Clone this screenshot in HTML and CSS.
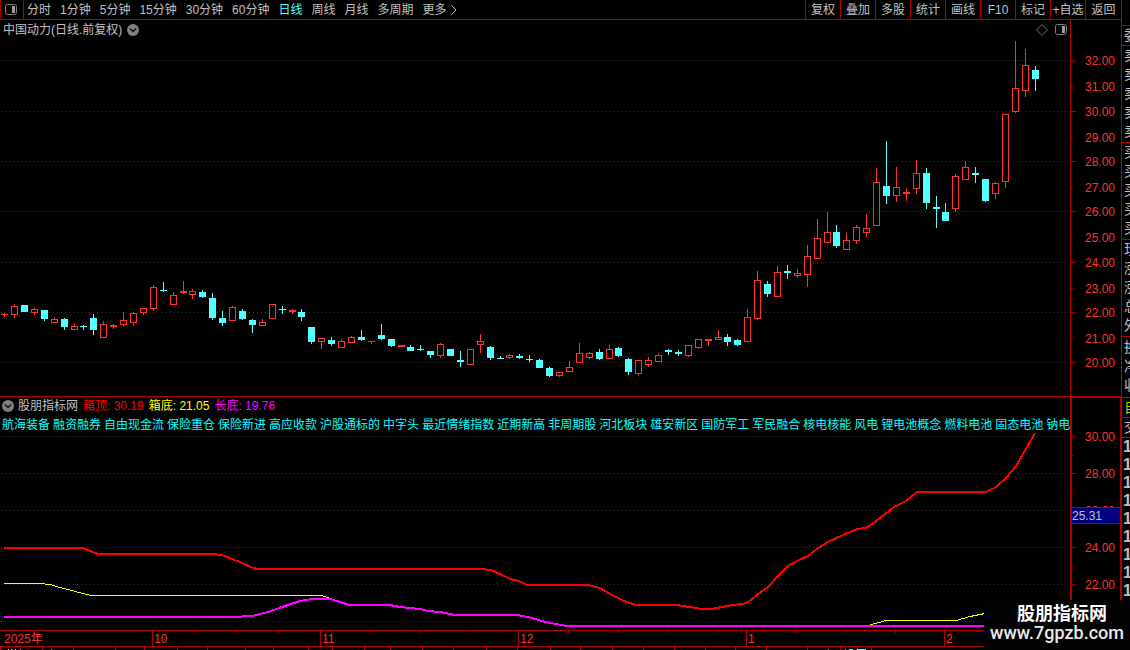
FILE: index.html
```html
<!DOCTYPE html>
<html lang="zh-CN">
<head>
  <meta charset="UTF-8" />
  <meta name="viewport" content="width=device-width, initial-scale=1.0" />
  <title>中国动力 日线</title>
  <link rel="stylesheet" href="styles.css">
</head>
<body>
  <div class="terminal">
    <main class="main">
      <!-- Toolbar -->
      <nav class="toolbar">
        <button class="panel-button" aria-label="侧栏">
          <svg width="13" height="12" viewBox="0 0 13 12">
            <rect x="0.5" y="0.5" width="11" height="10" rx="2" fill="none" stroke="#808080" />
            <rect x="7" y="2" width="3" height="7" fill="#a0a0a0" />
          </svg>
        </button>
        <div class="periods">
          <button>分时</button>
          <button>1分钟</button>
          <button>5分钟</button>
          <button>15分钟</button>
          <button>30分钟</button>
          <button>60分钟</button>
          <button class="active">日线</button>
          <button>周线</button>
          <button>月线</button>
          <button>多周期</button>
          <button class="more">更多
            <svg width="6" height="10" viewBox="0 0 6 10"><path d="M0.5 0.5 L5 5 L0.5 9.5" fill="none" stroke="#c0c0c0" /></svg>
          </button>
        </div>
        <div class="tools">
          <button>复权</button>
          <button>叠加</button>
          <button>多股</button>
          <button>统计</button>
          <button>画线</button>
          <button>F10</button>
          <button>标记</button>
          <button>+自选</button>
          <button>返回</button>
        </div>
      </nav>

      <!-- Price chart -->
      <section class="pane">
        <div class="plot">
          <header class="pane-head">
            <h1>中国动力(日线.前复权)</h1>
            <button aria-label="展开">
              <svg width="12" height="12" viewBox="0 0 12 12">
                <circle cx="6" cy="6" r="6" fill="#808080" />
                <path d="M3 4.5 L6 7.5 L9 4.5" fill="none" stroke="#101010" stroke-width="1.5" />
              </svg>
            </button>
            <div class="head-icons">
              <svg width="12" height="12" viewBox="0 0 12 12"><path d="M6 0.5 L11.5 6 L6 11.5 L0.5 6 Z" fill="none" stroke="#707070" /></svg>
              <svg width="12" height="12" viewBox="0 0 12 12">
                <rect x="0.5" y="0.5" width="11" height="10" rx="2" fill="none" stroke="#808080" />
                <rect x="7" y="2" width="3" height="7" fill="#a0a0a0" />
              </svg>
            </div>
          </header>
          <svg id="candles" class="chart" height="356" viewBox="0 40 1070 356" preserveAspectRatio="none"></svg>
        </div>
        <svg id="priceAxis" class="axis" width="51" height="376" viewBox="0 20 51 376"></svg>
      </section>

      <!-- Indicator -->
      <section class="pane indicator">
        <div class="plot">
          <header class="pane-head legend">
            <button aria-label="展开">
              <svg width="12" height="12" viewBox="0 0 12 12">
                <circle cx="6" cy="6" r="6" fill="#808080" />
                <path d="M3 4.5 L6 7.5 L9 4.5" fill="none" stroke="#101010" stroke-width="1.5" />
              </svg>
            </button>
            <h2>股朋指标网</h2>
            <span class="top">箱顶: 30.19</span>
            <span class="bottom">箱底: 21.05</span>
            <span class="long">长底: 19.76</span>
          </header>
          <div class="tags">
            <span>航海装备</span>
            <span>融资融券</span>
            <span>自由现金流</span>
            <span>保险重仓</span>
            <span>保险新进</span>
            <span>高应收款</span>
            <span>沪股通标的</span>
            <span>中字头</span>
            <span>最近情绪指数</span>
            <span>近期新高</span>
            <span>非周期股</span>
            <span>河北板块</span>
            <span>雄安新区</span>
            <span>国防军工</span>
            <span>军民融合</span>
            <span>核电核能</span>
            <span>风电</span>
            <span>锂电池概念</span>
            <span>燃料电池</span>
            <span>固态电池</span>
            <span>钠电</span>
          </div>
          <svg id="lines" class="chart" height="200" viewBox="0 433 1070 200" preserveAspectRatio="none"></svg>
        </div>
        <svg id="lineAxis" class="axis" width="51" height="236" viewBox="0 397 51 236"></svg>
      </section>

      <!-- Time axis -->
      <div class="timeline">
        <span>2025年</span>
        <span>10</span>
        <span>11</span>
        <span>12</span>
        <span>1</span>
        <span>2</span>
      </div>
      <svg id="strip" class="strip" height="3" viewBox="0 647 1121 3" preserveAspectRatio="none"></svg>
    </main>

    <!-- Quote panel, cut off by the window edge -->
    <aside class="quotes">
      <div class="blank"></div>
      <div class="group single"><span>委</span></div>
      <div class="group"><span>卖</span><span>卖</span><span>卖</span><span>卖</span><span>卖</span></div>
      <div class="group"><span>买</span><span>买</span><span>买</span><span>买</span><span>买</span></div>
      <div class="group"><span>现</span><span>涨</span><span>涨</span><span>总</span><span>外</span></div>
      <div class="group roomy"><span>换</span><span>净</span><span>收</span></div>
      <div class="group single note"><span>自</span></div>
      <div class="group single"><span>交</span></div>
      <div class="ticks">
        <span>1</span><span>1</span><span>1</span><span>1</span><span>1</span><span>1</span><span>1</span><span>1</span><span>1</span>
      </div>
    </aside>

    <div class="watermark">
      <strong>股朋指标网</strong>
      <span>www.7gpzb.com</span>
    </div>
  </div>

  <script src="chart.js"></script>
</body>
</html>
```
FILE: styles.css
```css
* {
  box-sizing: border-box;
}
body {
  margin: 0;
  background: #000;
  color: #c0c0c0;
  font-family: "Liberation Sans", "Noto Sans CJK SC", sans-serif;
  font-size: 12px;
  line-height: 18px;
}
button {
  padding: 0;
  border: none;
  background: none;
  color: inherit;
  font: inherit;
  white-space: nowrap;
  cursor: pointer;
}
svg {
  display: block;
}
h1,
h2 {
  margin: 0;
  font-size: 12px;
  font-weight: normal;
}

.terminal {
  position: relative;
  display: flex;
  min-height: 100vh;
  overflow: hidden;
}
.main {
  flex: 1;
  min-width: 0;
  display: flex;
  flex-direction: column;
}

/* Toolbar */
.toolbar {
  display: flex;
  height: 20px;
  border-bottom: 1px solid #b00000;
}
.panel-button {
  width: 24px;
  padding-left: 4px;
  border-left: 1px solid #b00000;
  border-right: 1px solid #b00000;
}
.periods {
  display: flex;
  gap: 9px;
  padding-left: 3px;
}
.periods .active {
  color: #54ffff;
}
.more {
  display: flex;
  align-items: center;
  gap: 4px;
}
.tools {
  display: flex;
  margin-left: auto;
}
.tools button {
  width: 35px;
  border-left: 1px solid #b00000;
}
.tools button:last-child {
  width: 36px;
}

/* Panes */
.pane {
  display: flex;
}
.plot {
  flex: 1;
  min-width: 0;
}
.chart {
  width: 100%;
}
.axis {
  flex: none;
}
.axis text {
  fill: #ff3232;
  font-size: 12px;
}
.axis .current {
  fill: #c0c0c0;
}
.pane-head {
  display: flex;
  align-items: center;
  gap: 5px;
  height: 20px;
  padding-left: 3px;
}
.head-icons {
  display: flex;
  gap: 7px;
  margin-left: auto;
  padding-right: 3px;
}

/* Indicator */
.indicator {
  border-top: 1px solid #b00000;
}
.legend {
  height: 18px;
  padding-left: 2px;
}
.legend h2 {
  margin-left: -1px;
}
.top {
  color: #ff0000;
}
.bottom {
  color: #ffff00;
}
.long {
  color: #ff00ff;
}
.tags {
  display: flex;
  gap: 3px;
  height: 18px;
  padding-left: 2px;
  color: #00ffff;
  line-height: 20px;
  white-space: nowrap;
  overflow: hidden;
}
.tags span {
  flex: none;
}

/* Time axis */
.timeline {
  display: grid;
  grid-template-columns: 152fr 168fr 198fr 228fr 198fr 177fr;
  color: #ff3232;
  line-height: 13px;
}
.timeline span {
  padding-left: 1px;
  border-left: 1px solid #b00000;
}
.timeline span:first-child {
  padding-left: 4px;
  border-left: none;
}
.strip {
  width: 100%;
  border-top: 1px solid #b00000;
  height: 4px;
}

/* Quote panel */
.quotes {
  flex: none;
  width: 9px;
  border-left: 1px solid #b00000;
  overflow: hidden;
  font-size: 14px;
  line-height: 19px;
  white-space: nowrap;
}
.quotes span {
  display: block;
  padding-left: 2px;
}
.blank {
  height: 26px;
  border-bottom: 1px solid #b00000;
}
.group {
  padding-bottom: 1px;
  border-bottom: 1px solid #b00000;
}
.single {
  padding-bottom: 0;
}
.roomy {
  padding: 1px 0 2px;
}
.note {
  color: #c8c800;
}
.ticks {
  font-size: 16px;
  font-weight: bold;
  line-height: 18px;
}
.ticks span {
  padding-left: 1px;
}

/* Watermark */
.watermark {
  position: absolute;
  right: 0;
  bottom: 0;
  width: 146px;
  height: 50px;
  padding-top: 4px;
  background: #020202;
  color: #fff;
  font-size: 18px;
  line-height: 20px;
  text-align: center;
}
.watermark strong,
.watermark span {
  display: block;
}
.watermark strong {
  padding-left: 10px;
}
.watermark span {
  font-family: Roboto, sans-serif;
  font-weight: 500;
  line-height: 18px;
  color: #e8e8e8;
}
```
FILE: chart.js
```js
const NS = 'http://www.w3.org/2000/svg';
const LINE = '#b00000';
const UP = '#ff3232';
const DOWN = '#54ffff';

function add(svg, tag, attrs, text) {
  const el = document.createElementNS(NS, tag);
  for (const key in attrs) el.setAttribute(key, attrs[key]);
  if (text) el.textContent = text;
  svg.appendChild(el);
  return el;
}

function rect(svg, x, y, width, height, fill) {
  add(svg, 'rect', { x, y, width, height, fill, 'shape-rendering': 'crispEdges' });
}

function grid(svg, rows) {
  rows.forEach(y => {
    add(svg, 'line', { x1: 1, x2: 1068, y1: y + 0.5, y2: y + 0.5, stroke: LINE, 'stroke-dasharray': '1 3', 'shape-rendering': 'crispEdges' });
  });
}

// high, body top, body bottom, low, direction (1 = up)
const candles = [
  [313, 314, 315, 317, 1], [304, 306, 315, 318, 1], [305, 305, 312, 312, 0], [308, 309, 313, 315, 1], [310, 310, 319, 321, 0],
  [317, 319, 323, 323, 1], [318, 319, 327, 330, 0], [323, 326, 330, 330, 1], [325, 326, 327, 330, 0], [314, 318, 330, 335, 0],
  [321, 324, 338, 338, 1], [324, 325, 327, 329, 1], [312, 320, 325, 326, 1], [312, 313, 323, 326, 1], [308, 308, 313, 315, 1],
  [285, 287, 309, 311, 1], [282, 290, 291, 292, 0], [292, 295, 305, 305, 1], [281, 291, 293, 294, 1], [289, 291, 295, 299, 1],
  [290, 292, 297, 298, 0], [293, 298, 318, 320, 0], [311, 318, 323, 326, 0], [306, 307, 321, 321, 1], [309, 311, 319, 320, 0],
  [319, 320, 325, 333, 0], [319, 322, 326, 326, 1], [304, 304, 319, 319, 1], [306, 309, 310, 314, 0], [309, 310, 312, 314, 1],
  [309, 312, 317, 321, 0], [327, 327, 342, 344, 0], [338, 338, 342, 349, 1], [337, 340, 344, 346, 0], [339, 341, 348, 348, 1],
  [336, 337, 343, 343, 1], [330, 337, 340, 341, 0], [341, 341, 342, 344, 1], [324, 335, 339, 340, 0], [339, 339, 346, 347, 0],
  [345, 345, 347, 347, 1], [345, 347, 351, 351, 0], [345, 349, 350, 351, 0], [351, 351, 355, 358, 0], [343, 344, 356, 358, 1],
  [349, 349, 356, 356, 0], [351, 360, 362, 367, 0], [349, 349, 365, 365, 1], [334, 341, 345, 353, 1], [346, 347, 358, 360, 0],
  [356, 358, 359, 359, 0], [354, 355, 358, 359, 1], [354, 356, 358, 359, 0], [355, 359, 360, 362, 0], [359, 360, 368, 368, 0],
  [367, 368, 376, 377, 0], [372, 372, 376, 377, 1], [361, 367, 372, 372, 1], [343, 353, 363, 363, 1], [352, 353, 358, 359, 1],
  [349, 352, 359, 360, 0], [345, 349, 359, 359, 1], [347, 348, 356, 357, 0], [358, 359, 372, 375, 0], [360, 360, 374, 376, 1],
  [357, 360, 365, 367, 1], [353, 355, 362, 362, 1], [349, 350, 352, 355, 0], [350, 352, 354, 356, 0], [345, 345, 356, 357, 1],
  [339, 339, 348, 349, 1], [339, 339, 341, 346, 1], [330, 337, 340, 340, 1], [334, 337, 342, 346, 0], [339, 340, 345, 346, 0],
  [309, 317, 342, 342, 1], [271, 280, 319, 320, 1], [281, 284, 294, 297, 0], [266, 272, 297, 297, 1], [265, 271, 273, 279, 0],
  [269, 273, 276, 278, 1], [245, 256, 275, 287, 1], [219, 238, 259, 259, 1], [212, 232, 243, 243, 1], [225, 232, 246, 248, 0],
  [233, 240, 250, 250, 1], [225, 227, 241, 244, 1], [214, 228, 233, 237, 1], [168, 182, 226, 226, 1], [141, 186, 196, 204, 0],
  [167, 187, 196, 202, 1], [188, 192, 194, 201, 1], [160, 173, 189, 194, 1], [168, 173, 203, 209, 0], [196, 207, 209, 228, 0],
  [203, 212, 221, 221, 0], [174, 176, 209, 212, 1], [161, 167, 180, 180, 1], [167, 173, 175, 183, 0], [179, 179, 201, 202, 0],
  [182, 183, 194, 199, 1], [114, 114, 182, 188, 1], [41, 88, 112, 113, 1], [49, 65, 91, 97, 1], [66, 70, 79, 91, 0]
];

// Price chart
const plot = document.getElementById('candles');
const priceRows = [60, 111, 161, 211, 262, 312, 362];
grid(plot, priceRows);

candles.forEach(([high, top, bottom, low, up], i) => {
  const x = Math.floor(4.742 + i * 9.907);
  const color = up ? UP : DOWN;
  rect(plot, x, high, 1, low - high, color);
  rect(plot, x - 3, top, 7, bottom - top, color);
  if (up && bottom - top > 2) rect(plot, x - 2, top + 1, 5, bottom - top - 2, '#000');
});

const priceAxis = document.getElementById('priceAxis');
rect(priceAxis, 0, 20, 1, 376, LINE);
priceRows.forEach((y, i) => {
  rect(priceAxis, 1, y, 5, 1, LINE);
  add(priceAxis, 'text', { x: 15, y: y + 5 }, (32 - i * 2) + '.00');
  if (i < 6) {
    rect(priceAxis, 1, y + 26, 2, 1, LINE);
    add(priceAxis, 'text', { x: 15, y: y + 31 }, (31 - i * 2) + '.00');
  }
});

// Indicator lines
const lines = document.getElementById('lines');
const lineRows = [436, 473, 510, 547, 584, 621];
grid(lines, lineRows);

function polyline(points, color, width) {
  add(lines, 'polyline', { points, fill: 'none', stroke: color, 'stroke-width': width, 'shape-rendering': 'crispEdges' });
}
polyline('4,583.5 40,583.5 50,584.5 60,587.5 91,595.5 322,595.5 333,599.5', '#ffff00', 1);
polyline('868,625.5 886,620.5 956,620.5 970,616.5 990,612.5', '#ffff00', 1);
polyline('4,548 83,548 90,551 98,554 212,554 222,555 240,562 253,568 258,569 480,569 491,570 502,575 510,579 519,581 527,585 588,585 600,588 612,595 624,601 636,605 676,605 690,607 702,609 712,609 727,606 747,603 757,595 768,587 779,575 788,566 797,561 808,556 818,548 828,542 843,535 857,529 866,528 876,521 894,507 906,501 917,492 986,492 996,487 1006,478 1016,466 1026,449 1035,433', '#ff0000', 2);
polyline('4,617 232,617 252,616 268,612 282,607 300,601 312,599 330,599 340,602 349,605 390,605 400,607 420,609 428,611 440,612 455,615 518,615 532,618 545,622 567,626 1068,626', '#ff00ff', 2);

rect(lines, 0, 630, 1070, 1, LINE);
[152, 194, 236, 278, 320, 370, 420, 469, 518, 568, 618, 667, 717, 746, 796, 845, 895, 944].forEach(x => rect(lines, x, 631, 1, 2, LINE));

const lineAxis = document.getElementById('lineAxis');
rect(lineAxis, 0, 397, 51, 1, LINE);
rect(lineAxis, 0, 397, 2, 236, LINE);
rect(lineAxis, 50, 397, 1, 236, LINE);
lineRows.slice(0, 5).forEach((y, i) => {
  rect(lineAxis, 2, y, 4, 1, LINE);
  rect(lineAxis, 2, y + 19, 1, 1, LINE);
  add(lineAxis, 'text', { x: 15, y: y + 5 }, (30 - i * 2) + '.00');
});

// Current value marker
rect(lineAxis, 2, 507, 48, 17, LINE);
rect(lineAxis, 2, 508, 48, 15, '#000080');
add(lineAxis, 'text', { x: 2, y: 520, class: 'current' }, '25.31');

// Top edge of the row under the time axis
const strip = document.getElementById('strip');
[0, 42, 73, 115, 144, 177, 207, 245, 273, 308, 332, 364, 390, 422, 453, 486, 517, 550, 580, 612, 643, 674, 705, 735, 766, 807, 840, 871].forEach(x => rect(strip, x, 647, 1, 3, LINE));
[8, 11, 15, 20, 51, 828, 845].forEach(x => rect(strip, x, 649, 1, 1, '#c0c0c0'));
rect(strip, 849, 649, 4, 1, DOWN);
rect(strip, 857, 649, 9, 1, DOWN);
```
